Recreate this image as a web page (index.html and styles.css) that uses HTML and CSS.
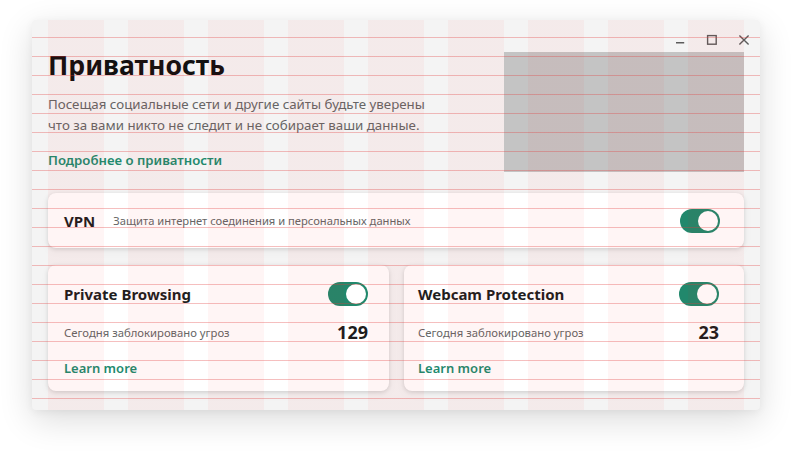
FILE: index.html
```html
<!DOCTYPE html>
<html lang="ru">
<head>
<meta charset="utf-8">
<title>Приватность</title>
<link rel="stylesheet" href="styles.css">
</head>
<body>
<div class="window">
  <div class="titlebar">
    <span class="tb-btn"><svg viewBox="0 0 24 24" width="24" height="24"><path d="M8 14.7H16.2"/></svg></span>
    <span class="tb-btn"><svg viewBox="0 0 24 24" width="24" height="24"><rect x="7.6" y="7.6" width="8.6" height="8.6"/></svg></span>
    <span class="tb-btn"><svg viewBox="0 0 24 24" width="24" height="24"><path d="M7.4 7.4L16.6 16.6M16.6 7.4L7.4 16.6"/></svg></span>
  </div>
  <div class="header">
    <div class="intro">
      <h1 class="title">Приватность</h1>
      <p class="lead">Посещая социальные сети и другие сайты будьте уверены<br>что за вами никто не следит и не собирает ваши данные.</p>
      <a class="link" href="#">Подробнее о приватности</a>
    </div>
    <div class="placeholder"></div>
  </div>
  <div class="card vpn">
    <span class="card-title">VPN</span>
    <span class="vpn-desc">Защита интернет соединения и персональных данных</span>
    <span class="toggle"><span class="knob"></span></span>
  </div>
  <div class="cards">
    <div class="card feature feature-left">
      <div class="feature-head">
        <span class="card-title">Private Browsing</span>
        <span class="toggle"><span class="knob"></span></span>
      </div>
      <div class="stat">
        <span class="stat-label">Сегодня заблокировано угроз</span>
        <span class="stat-value">129</span>
      </div>
      <a class="link learn" href="#">Learn more</a>
    </div>
    <div class="card feature feature-right">
      <div class="feature-head">
        <span class="card-title">Webcam Protection</span>
        <span class="toggle"><span class="knob"></span></span>
      </div>
      <div class="stat">
        <span class="stat-label">Сегодня заблокировано угроз</span>
        <span class="stat-value">23</span>
      </div>
      <a class="link learn" href="#">Learn more</a>
    </div>
  </div>
  <div class="grid-cols"></div>
  <div class="grid-rows"></div>
</div>
</body>
</html>
```

FILE: styles.css
```css
* { box-sizing: border-box; }
html, body { margin: 0; padding: 0; background: #ffffff; }
body {
  font-family: "Noto Sans", "Open Sans", "Liberation Sans", sans-serif;
  color: #1a1a1a;
  width: 793px;
  height: 455px;
  overflow: hidden;
}
.window {
  position: relative;
  margin: 20px 0 0 32px;
  width: 728px;
  height: 390px;
  background: #f4f4f4;
  border-radius: 4px;
  overflow: hidden;
  padding: 0 16px;
  box-shadow: 0 10px 34px rgba(0, 0, 0, 0.14), 0 2px 8px rgba(0, 0, 0, 0.05);
}
.titlebar {
  height: 32px;
  padding-top: 8px;
  margin-right: -12px;
  display: flex;
  justify-content: flex-end;
  gap: 8px;
}
.tb-btn { width: 24px; height: 24px; display: block; }
.tb-btn svg { display: block; fill: none; stroke: #5c5c5c; stroke-width: 1.4; }
.header {
  display: flex;
  justify-content: space-between;
  height: 120px;
}
.intro { display: flex; flex-direction: column; align-items: flex-start; }
.title {
  margin: 0;
  font-size: 26.6px;
  line-height: 26px;
  font-weight: 700;
  color: #111;
}
.lead {
  margin: 16px 0 0;
  font-size: 13.3px;
  line-height: 20.5px;
  color: #666;
}
.link {
  color: #1f8a6e;
  text-decoration: none;
  font-weight: 600;
  font-size: 13.2px;
  line-height: 20px;
}
.intro .link { margin-top: 15px; }
.placeholder {
  width: 240px;
  height: 120px;
  background: #c4c4c4;
}
.card {
  background: #ffffff;
  border-radius: 8px;
  box-shadow: 0 1px 4px rgba(0, 0, 0, 0.12), 0 3px 10px rgba(0, 0, 0, 0.05);
}
.vpn {
  margin-top: 21px;
  height: 55px;
  display: flex;
  align-items: center;
  padding: 0 24px 0 16px;
}
.card-title {
  font-size: 15px;
  font-weight: 700;
  color: #1e1e1e;
}
.vpn-desc {
  margin-left: 18px;
  font-size: 11.2px;
  color: #666;
  flex: 1;
}
.toggle {
  width: 40px;
  height: 24px;
  border-radius: 12px;
  background: #21886c;
  position: relative;
  flex: none;
}
.knob {
  position: absolute;
  right: 2px;
  top: 2px;
  width: 20px;
  height: 20px;
  border-radius: 50%;
  background: #fff;
}
.cards {
  margin-top: 17px;
  display: grid;
  grid-template-columns: 341px 340px;
  column-gap: 15px;
}
.feature {
  height: 126px;
  padding-top: 17px;
  display: flex;
  flex-direction: column;
  align-items: stretch;
}
.feature-left { padding-left: 16px; padding-right: 21px; }
.feature-right { padding-left: 14px; padding-right: 25px; }
.feature-head {
  display: flex;
  justify-content: space-between;
  align-items: center;
  height: 24px;
}
.stat {
  margin-top: 14px;
  display: flex;
  justify-content: space-between;
  align-items: center;
  line-height: 24px;
}
.stat-label { font-size: 11.3px; color: #666; line-height: 18px; padding-top: 1px; }
.stat-value { font-size: 18px; font-weight: 700; color: #1e1e1e; }
.learn { margin-top: 14px; align-self: flex-start; font-size: 13px; }
.grid-cols {
  position: absolute;
  top: 0;
  bottom: 0;
  left: 16px;
  right: 16px;
  pointer-events: none;
  background: repeating-linear-gradient(to right, rgba(255, 0, 0, 0.04) 0 56px, transparent 56px 80px);
}
.grid-rows {
  position: absolute;
  top: 0;
  left: 0;
  right: 0;
  bottom: 0;
  pointer-events: none;
  background: repeating-linear-gradient(to bottom, transparent 0 17px, rgba(225, 60, 60, 0.33) 17px 18px, transparent 18px 19px);
}
```
